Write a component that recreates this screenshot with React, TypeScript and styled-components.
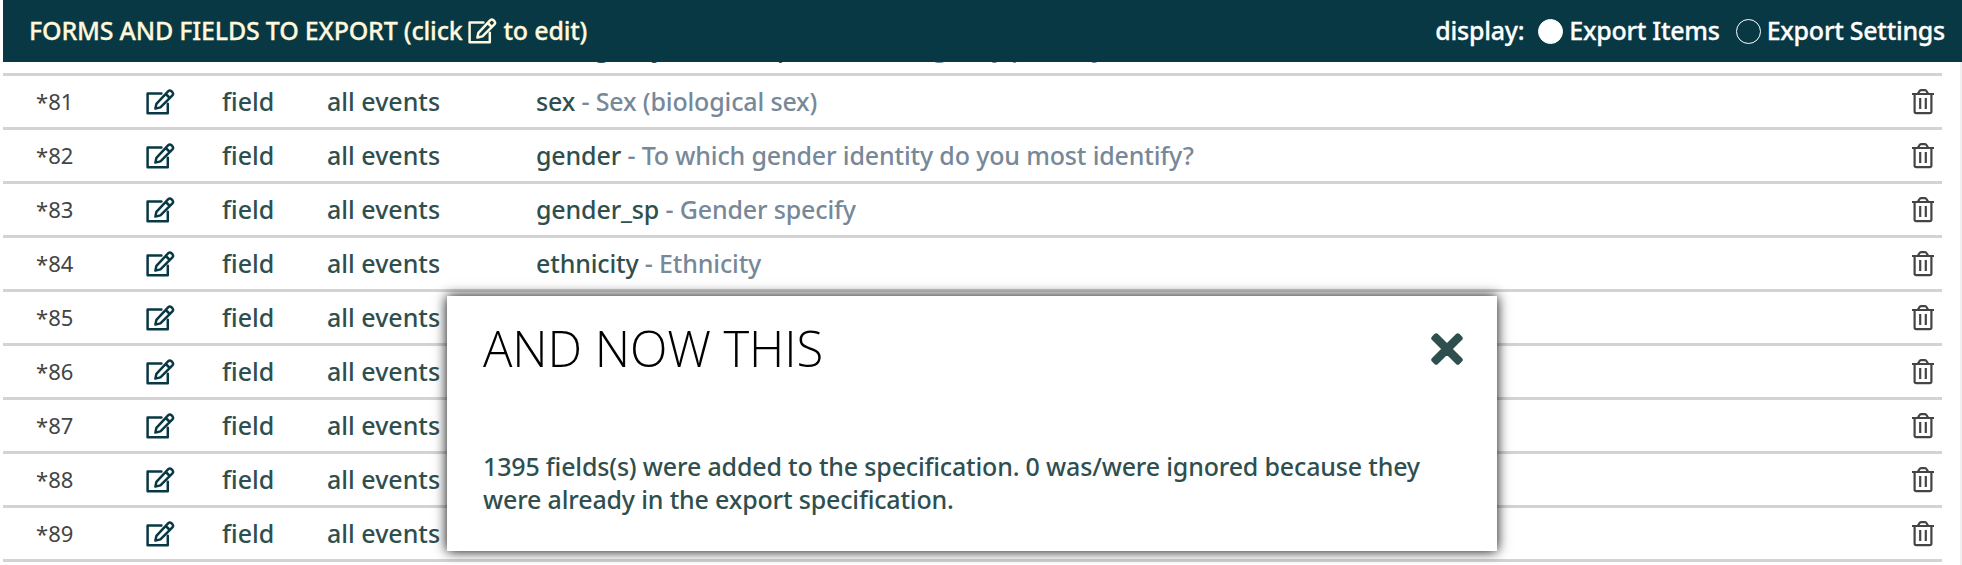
import React from "react";
import styled, { createGlobalStyle } from "styled-components";

const GlobalStyle = createGlobalStyle`
  * { box-sizing: border-box; }
  body { margin: 0; background: #fff; font-family: "Noto Sans", sans-serif; font-weight: 500; color: #2f4f4f; overflow: hidden; }
`;

const Page = styled.div`
  position: relative;
  height: 565px;
  padding-left: 3px;
  overflow: hidden;
`;

const Header = styled.header`
  display: flex;
  justify-content: space-between;
  align-items: center;
  height: 62px;
  padding: 0 17px 2px 26px;
  background: #083843;
  font-size: 25px;
  letter-spacing: -0.26px;
  -webkit-text-stroke: 0.3px currentColor;
  white-space: nowrap;
`;

const Heading = styled.div`
  display: flex;
  align-items: center;
  letter-spacing: -0.2px;
  color: #fff8dc;
`;

const HeaderIcon = styled.span`
  display: flex;
  margin: 1px 6px 0 6px;
`;

const Display = styled.div`
  display: flex;
  align-items: center;
  color: #fff;
`;

const Radio = styled.span<{ $on?: boolean }>`
  width: 25px;
  height: 25px;
  margin: 2px 6px 0 ${(p) => (p.$on ? 14 : 16)}px;
  border: 1px solid #fff;
  border-radius: 50%;
  background: ${(p) => (p.$on ? "#fff" : "transparent")};
`;

const Body = styled.div`
  display: flex;
  height: 503px;
`;

const List = styled.div`
  display: flex;
  flex-direction: column;
  justify-content: flex-end;
  flex: 1;
  height: 500px;
  margin-right: 18px;
  overflow: hidden;
`;

const ScrollTrack = styled.div`
  width: 2px;
  background: #f0f0f0;
`;

const Row = styled.div`
  display: grid;
  grid-template-columns: 109px 110px 105px 209px 1fr 30px;
  align-items: center;
  flex: none;
  height: 54px;
  border-bottom: 3px solid #d3d3d3;
  font-size: 25px;
  white-space: nowrap;
`;

const Cell = styled.span`
  padding-bottom: 1px;
`;

const Index = styled(Cell)`
  padding-left: 33px;
  font-size: 22px;
  font-weight: 400;
  color: #444;
`;

const EditCell = styled.span`
  display: flex;
  padding-left: 34px;
  color: #083843;
`;

const FieldCell = styled(Cell)`
  letter-spacing: -0.15px;
`;

const TrashCell = styled.span`
  display: flex;
  color: #444;
`;

const Label = styled.span`
  color: #778899;
`;

const Modal = styled.section`
  position: absolute;
  left: 447px;
  top: 296px;
  width: 1050px;
  height: 255px;
  padding: 20px 34px 0 36px;
  background: #fff;
  box-shadow: 0 0 12px #000;
`;

const ModalTop = styled.div`
  display: flex;
  justify-content: space-between;
  align-items: center;
  height: 66px;
`;

const Title = styled.h1`
  margin: 0;
  padding-bottom: 2px;
  font: 300 49px "Open Sans", sans-serif;
  letter-spacing: -0.1px;
  color: #000;
`;

const Message = styled.p`
  width: 960px;
  margin: 68px 0 0;
  font-size: 25px;
  line-height: 33px;
  letter-spacing: -0.17px;
`;

const EditIcon = () => (
  <svg width="29" height="26" viewBox="0 0 29 26" fill="none" stroke="currentColor" strokeWidth="2.5" strokeLinejoin="round" strokeLinecap="round">
    <path d="M15.4 4.4H1.6V24.2H21.8V14.8" />
    <path d="M9.4 19.6L10.4 14.8L22.3 2.2Q23.8 0.8 25.4 2.2L26.4 3.2Q27.8 4.8 26.4 6.4L14.4 18.4ZM19.8 5L23.8 9" />
  </svg>
);

const TrashIcon = () => (
  <svg width="22" height="26" viewBox="0 0 22 26" fill="none" stroke="currentColor" strokeWidth="2.2">
    <path d="M0 5H22M6 4.6L7.4 2.2Q8 1.2 9 1.2H13Q14 1.2 14.6 2.2L16 4.6M2.6 5V22.6Q2.6 24.2 4.2 24.2H17.8Q19.4 24.2 19.4 22.6V5M8.2 9V20M13.8 9V20" />
  </svg>
);

const CloseIcon = () => (
  <svg width="32" height="32" viewBox="0 0 32 32" fill="#2f4f4f" stroke="#2f4f4f" strokeWidth="5" strokeLinejoin="round">
    <path d="M5.2 2.8L16 13.6L26.8 2.8L29.2 5.2L18.4 16L29.2 26.8L26.8 29.2L16 18.4L5.2 29.2L2.8 26.8L13.6 16L2.8 5.2Z" />
  </svg>
);

const rows = [
  { id: 80, name: "biologics_years_complete", label: "Missing only primary" },
  { id: 81, name: "sex", label: "Sex (biological sex)" },
  { id: 82, name: "gender", label: "To which gender identity do you most identify?" },
  { id: 83, name: "gender_sp", label: "Gender specify" },
  { id: 84, name: "ethnicity", label: "Ethnicity" },
  { id: 85 },
  { id: 86 },
  { id: 87 },
  { id: 88 },
  { id: 89 },
];

export default function App() {
  return (
    <Page>
      <GlobalStyle />
      <Header>
        <Heading>
          FORMS AND FIELDS TO EXPORT (click
          <HeaderIcon><EditIcon /></HeaderIcon>
          to edit)
        </Heading>
        <Display>
          display:
          <Radio $on />
          Export Items
          <Radio />
          Export Settings
        </Display>
      </Header>
      <Body>
        <List>
          {rows.map((r) => (
            <Row key={r.id}>
              <Index>*{r.id}</Index>
              <EditCell><EditIcon /></EditCell>
              <Cell>field</Cell>
              <Cell>all events</Cell>
              <FieldCell>{r.name}{r.label && <Label> - {r.label}</Label>}</FieldCell>
              <TrashCell><TrashIcon /></TrashCell>
            </Row>
          ))}
        </List>
        <ScrollTrack />
      </Body>
      <Modal>
        <ModalTop>
          <Title>AND NOW THIS</Title>
          <CloseIcon />
        </ModalTop>
        <Message>
          1395 fields(s) were added to the specification. 0 was/were ignored because they were already in the export specification.
        </Message>
      </Modal>
    </Page>
  );
}
